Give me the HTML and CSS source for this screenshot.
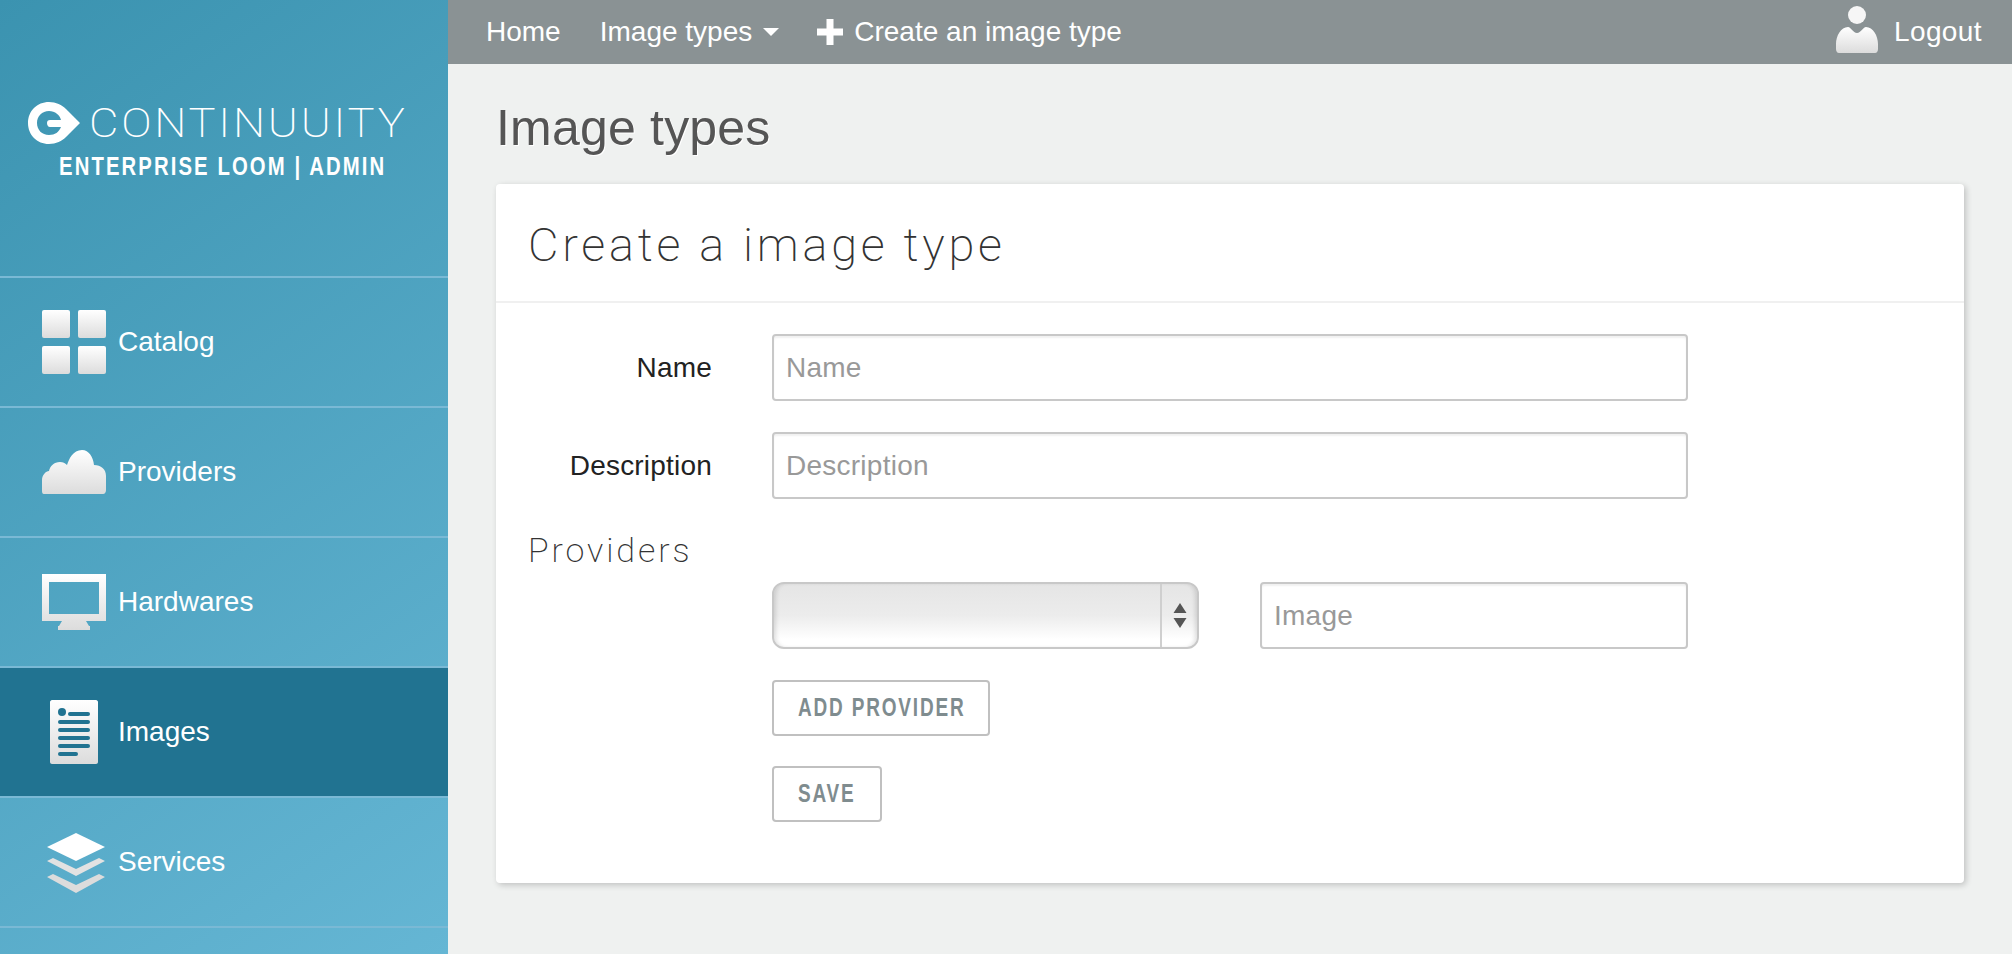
FILE: index.html
```html
<!DOCTYPE html>
<html lang="en">
<head>
<meta charset="utf-8">
<title>Image types</title>
<link rel="stylesheet" href="styles.css">
</head>
<body>
<svg class="defs" width="0" height="0" aria-hidden="true">
  <defs>
    <linearGradient id="ig" x1="0" y1="0" x2="0" y2="1">
      <stop offset="0" stop-color="#ffffff"/>
      <stop offset="1" stop-color="#dcdcdc"/>
    </linearGradient>
  </defs>
</svg>
<div class="app">
  <aside class="sidebar">
    <div class="brand">
      <div class="brand-top">
        <svg class="brand-mark" viewBox="0 0 52 42" width="52" height="42">
          <path fill="#fff" fill-rule="evenodd" d="M21 0C28 0 34 3 38 7L52 21L38 35C34 39 28 42 21 42C9 42 0 33 0 21C0 9 9 0 21 0ZM21 9C14 9 9 14 9 21C9 28 14 33 21 33C27 33 31 30 33 25L22 25C20 25 19 23 19 21C19 19 20 18 22 18L33 18C32 13 27 9 21 9Z"/>
        </svg>
        <span class="brand-name">CONTINUUITY</span>
      </div>
      <div class="brand-sub">ENTERPRISE LOOM | ADMIN</div>
    </div>
    <nav class="side-nav">
      <a class="side-item">
        <svg class="side-icon" viewBox="0 0 64 64" width="64" height="64">
          <rect x="0" y="0" width="28" height="28" rx="2" fill="url(#ig)"/>
          <rect x="36" y="0" width="28" height="28" rx="2" fill="url(#ig)"/>
          <rect x="0" y="36" width="28" height="28" rx="2" fill="url(#ig)"/>
          <rect x="36" y="36" width="28" height="28" rx="2" fill="url(#ig)"/>
        </svg>
        <span>Catalog</span>
      </a>
      <a class="side-item">
        <svg class="side-icon" viewBox="0 0 64 64" width="64" height="64">
          <path fill="url(#ig)" d="M2 54C0 54 0 52 0 50L0 40C0 35 4 31 7 31C8 26 12 22 18 22C21 22 23 23 25 25C27 19 31 10 40 10C47 10 51 17 52 25C59 25 64 29 64 36L64 50C64 52 63 54 61 54Z"/>
        </svg>
        <span>Providers</span>
      </a>
      <a class="side-item">
        <svg class="side-icon" viewBox="0 0 64 64" width="64" height="64">
          <path fill="url(#ig)" fill-rule="evenodd" d="M0 4H64V51H44L47 56H48V60H16V56H17L20 51H0ZM7 12V44H57V12Z"/>
        </svg>
        <span>Hardwares</span>
      </a>
      <a class="side-item active">
        <svg class="side-icon" viewBox="0 0 64 64" width="64" height="64">
          <path fill="url(#ig)" fill-rule="evenodd" d="M10 0H54C55 0 56 1 56 2V62C56 63 55 64 54 64H10C9 64 8 63 8 62V2C8 1 9 0 10 0Z"/>
          <g fill="#217391">
            <circle cx="20" cy="12" r="4"/>
            <rect x="26" y="12" width="22" height="4" rx="2"/>
            <rect x="16" y="20" width="32" height="4" rx="2"/>
            <rect x="16" y="28" width="32" height="4" rx="2"/>
            <rect x="16" y="36" width="32" height="4" rx="2"/>
            <rect x="16" y="44" width="32" height="4" rx="2"/>
            <rect x="16" y="52" width="20" height="4" rx="2"/>
          </g>
        </svg>
        <span>Images</span>
      </a>
      <a class="side-item">
        <svg class="side-icon" viewBox="0 0 64 64" width="64" height="64">
          <path fill="#fff" d="M34 3L63 17L34 31L5 17Z"/>
          <path fill="#e2e2e2" d="M11 28L34 39L57 28L63 31L34 46L5 31Z"/>
          <path fill="#dcdcdc" d="M11 44L34 55L57 44L63 47L34 63L5 47Z"/>
        </svg>
        <span>Services</span>
      </a>
      <div class="side-rest"></div>
    </nav>
  </aside>
  <div class="main">
    <header class="topbar">
      <a class="top-link home">Home</a>
      <a class="top-link types">Image types<i class="caret"></i></a>
      <a class="top-link create">
        <svg viewBox="0 0 26 26" width="26" height="26"><path fill="#fff" d="M9.5 0H16.5V9.500H26V16.500H16.500V26H9.500V16.500H0V9.500H9.500Z"/></svg>
        <span>Create an image type</span>
      </a>
      <a class="top-link logout">
        <svg viewBox="0 0 42 47" width="42" height="47">
          <circle cx="21" cy="9" r="9" fill="#f6f6f6"/>
          <path fill="url(#ig)" d="M12 21C15 21 17 27 21 27C25 27 27 21 30 21C37 21 42 30 42 38V43C42 45 41 47 39 47H3C1 47 0 45 0 43V38C0 30 5 21 12 21Z"/>
        </svg>
        <span>Logout</span>
      </a>
    </header>
    <div class="content">
      <h1 class="page-title">Image types</h1>
      <section class="card">
        <h2 class="card-title">Create a image type</h2>
        <form class="card-body">
          <div class="form-row">
            <label class="form-label">Name</label>
            <input class="field" type="text" placeholder="Name">
          </div>
          <div class="form-row">
            <label class="form-label">Description</label>
            <input class="field" type="text" placeholder="Description">
          </div>
          <h3 class="section-title">Providers</h3>
          <div class="provider-row">
            <div class="select-wrap">
              <select class="select"></select>
              <span class="select-arrows">
                <svg viewBox="0 0 14 25" width="14" height="25"><path fill="#555" d="M7 0L13.500 10H.5ZM.5 15H13.500L7 25Z"/></svg>
              </span>
            </div>
            <input class="field image-field" type="text" placeholder="Image">
          </div>
          <div class="button-row"><button class="btn btn-add" type="button"><span class="btn-label">ADD PROVIDER</span></button></div>
          <div class="button-row"><button class="btn btn-save" type="button"><span class="btn-label">SAVE</span></button></div>
        </form>
      </section>
    </div>
  </div>
</div>
</body>
</html>
```
FILE: styles.css
```css
* { box-sizing: border-box; }
html, body { margin: 0; padding: 0; height: 100%; overflow: hidden; }
body { font-family: "Liberation Sans", Arial, sans-serif; font-size: 28px; background: #eff1f0; }
.defs { position: absolute; }
.app { display: flex; height: 954px; }

.sidebar { width: 448px; flex: none; display: flex; flex-direction: column; background: linear-gradient(145deg, #3b93b0 0%, #65b6d4 100%); color: #fff; }
.brand { height: 276px; padding: 102px 0 0 28px; }
.brand-top { display: flex; align-items: center; height: 42px; }
.brand-mark { flex: none; }
.brand-name { margin-left: 9px; font-family: Roboto, sans-serif; font-weight: 200; font-size: 41px; letter-spacing: 2.5px; line-height: 42px; white-space: nowrap; transform: scaleX(1.105); transform-origin: left center; }
.brand-sub { margin: 7px 0 0 31px; font-weight: 700; font-size: 26px; line-height: 30px; letter-spacing: 2.7px; white-space: nowrap; transform: scaleX(.78); transform-origin: left center; }

.side-nav { flex: 1; display: flex; flex-direction: column; }
.side-item { height: 130px; display: flex; align-items: center; padding-left: 42px; border-top: 2px solid #7ab9d5; color: #fff; }
.side-item.active { background: #217391; }
.side-icon { flex: none; margin-right: 12px; }
.side-rest { flex: 1; border-top: 2px solid #7ab9d5; }

.main { flex: 1; min-width: 0; display: flex; flex-direction: column; }
.topbar { height: 64px; flex: none; display: flex; align-items: center; padding-left: 38px; background: #8a9294; color: #fff; }
.top-link { display: flex; align-items: center; white-space: nowrap; }
.types { margin-left: 39px; }
.caret { width: 0; height: 0; margin-left: 11px; border-left: 8px solid transparent; border-right: 8px solid transparent; border-top: 8px solid #fff; }
.create { margin-left: 38px; }
.create svg { margin-right: 11px; }
.logout { margin-left: auto; margin-right: 30px; letter-spacing: .4px; }
.logout svg { margin: 0 16px 5px 0; }

.content { flex: 1; padding: 0 48px; }
.page-title { margin: 0; padding-top: 36px; height: 120px; font-size: 50px; line-height: 56px; font-weight: 400; letter-spacing: .2px; color: #555; text-shadow: 1px 1px 0 #fff; }
.card { height: 699px; background: #fff; border-radius: 4px; box-shadow: 2px 2px 6px rgba(0,0,0,.2); }
.card-title { margin: 0; height: 119px; padding: 0 32px; border-bottom: 2px solid #f0f0f0; font-family: Roboto, sans-serif; font-weight: 200; font-size: 47px; line-height: 122px; letter-spacing: 3.75px; color: #333; }
.card-body { padding: 31px 32px 0; }
.form-row { display: flex; align-items: center; margin-bottom: 31px; }
.form-label { width: 184px; flex: none; margin-right: 60px; text-align: right; color: #222; letter-spacing: .2px; }
.field { width: 916px; height: 67px; padding: 0 12px; border: 2px solid #c8c8c8; border-radius: 4px; font: inherit; letter-spacing: .25px; color: #333; box-shadow: inset 0 2px 2px rgba(0,0,0,.06); background: #fff; outline: none; }
.field::placeholder { color: #999; opacity: 1; }
.section-title { margin: 0; height: 52px; font-family: Roboto, sans-serif; font-weight: 200; font-size: 34px; line-height: 40px; letter-spacing: 2.9px; color: #333; }
.provider-row { display: flex; margin: 0 0 31px 244px; gap: 61px; }
.select-wrap { position: relative; width: 427px; height: 67px; flex: none; }
.select { display: block; width: 100%; height: 100%; appearance: none; -webkit-appearance: none; border: 2px solid #c8c8c8; border-radius: 12px; background: linear-gradient(#e5e5e5 0%, #ececec 50%, #ffffff 88%); box-shadow: inset 4px 0 4px -2px rgba(0,0,0,.12), inset -4px 0 4px -2px rgba(0,0,0,.12); outline: none; }
.select-arrows { position: absolute; top: 2px; right: 2px; bottom: 2px; width: 37px; display: flex; align-items: center; justify-content: center; border-left: 2px solid #cfcfcf; }
.image-field { width: 428px; }
.button-row { margin: 0 0 30px 244px; }
.btn { display: block; height: 56px; padding: 0 0 2px 24px; text-align: left; background: #fff; border: 2px solid #c0c0c0; border-radius: 4px; }
.btn-add { width: 218px; }
.btn-save { width: 110px; }
.btn-label { display: block; font-family: "Liberation Sans", sans-serif; font-weight: 700; font-size: 26px; letter-spacing: 2.5px; color: #7f8c8f; white-space: nowrap; transform: scaleX(.73); transform-origin: left center; }
```
